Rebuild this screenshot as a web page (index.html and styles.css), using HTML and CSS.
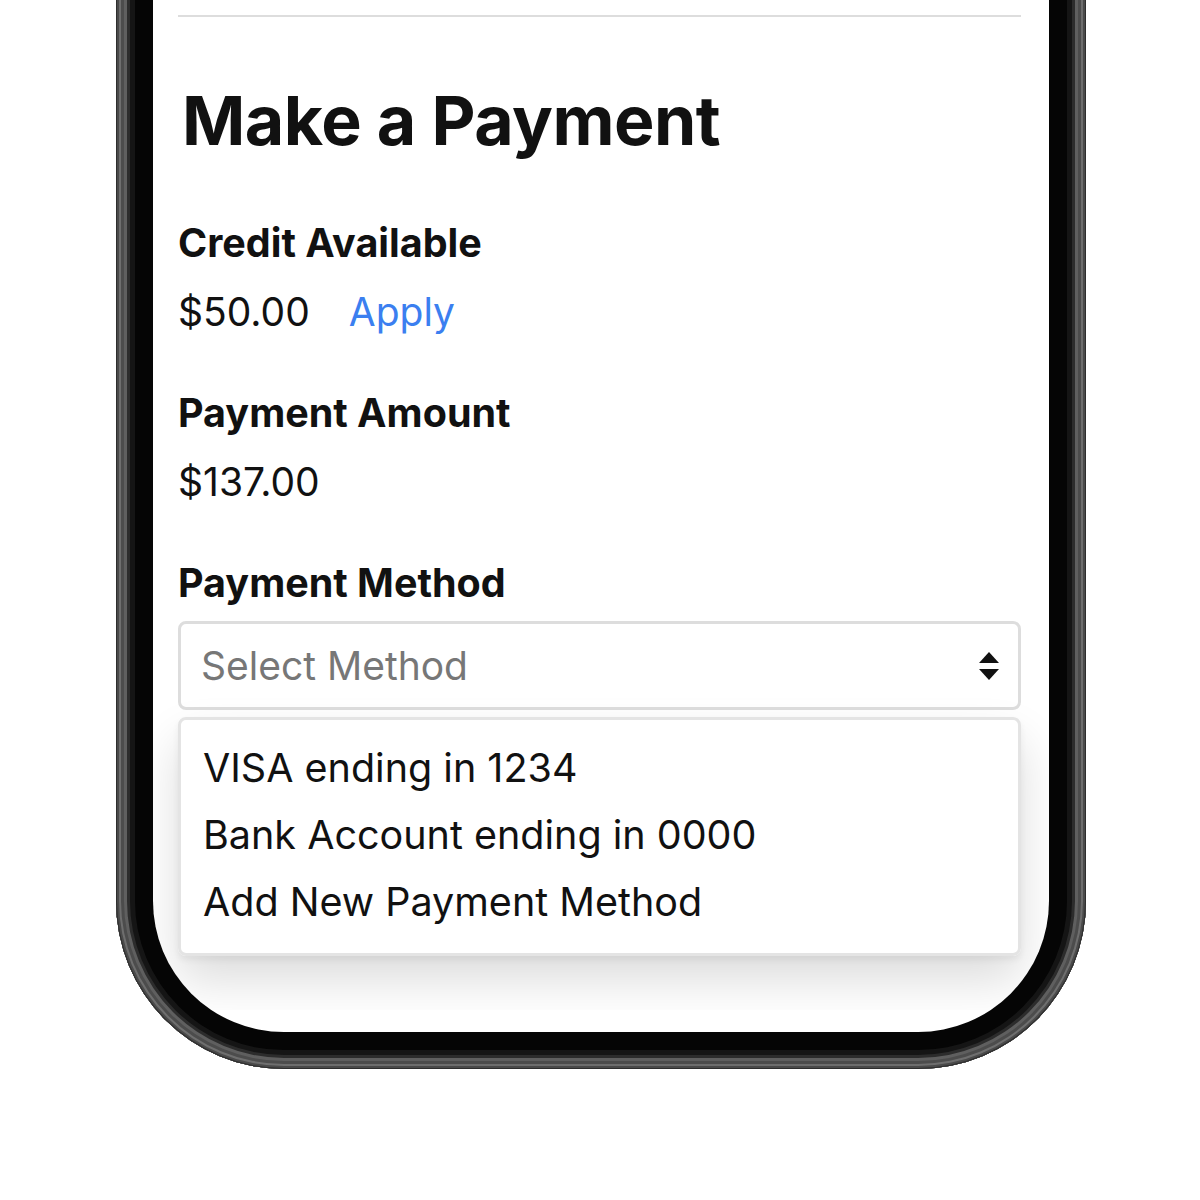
FILE: index.html
```html
<!DOCTYPE html>
<html lang="en">
<head>
    <meta charset="UTF-8">
    <meta name="viewport" content="width=device-width, initial-scale=1.0">
    <title>Make a Payment</title>
    <link rel="stylesheet" href="styles.css">
</head>
<body>

    <div class="phone">
        <div class="screen">
            <div class="content">
                <hr class="divider">

                <h1>Make a Payment</h1>

                <div class="field">
                    <div class="field-label">Credit Available</div>
                    <div class="field-value">
                        <span>$50.00</span>
                        <a href="#" class="link-apply">Apply</a>
                    </div>
                </div>

                <div class="field">
                    <div class="field-label">Payment Amount</div>
                    <div class="field-value">$137.00</div>
                </div>

                <div class="field field-method">
                    <div class="field-label">Payment Method</div>
                    <div class="select-box">
                        <span class="select-placeholder">Select Method</span>
                        <svg class="select-arrows" width="20" height="30" viewBox="0 0 20 30">
                            <path d="M10 1 L20 12 L0 12 Z" fill="#111"/>
                            <path d="M0 18 L20 18 L10 29 Z" fill="#111"/>
                        </svg>
                    </div>
                    <ul class="dropdown">
                        <li>VISA ending in 1234</li>
                        <li>Bank Account ending in 0000</li>
                        <li>Add New Payment Method</li>
                    </ul>
                </div>
            </div>
        </div>
    </div>

</body>
</html>
```

FILE: styles.css
```css
/* Basic Reset */
* {
    margin: 0;
    padding: 0;
    box-sizing: border-box;
}

body {
    font-family: 'Inter', 'Liberation Sans', sans-serif;
    background-color: #ffffff;
    color: #111111;
}

/* Phone frame: layered grey bezel fading into a black ring.
   Starts above the viewport so only the lower part shows. */
.phone {
    width: 970px;
    margin: -20px 0 0 116px;
    background-color: #050505;
    border-radius: 0 0 168px 168px;
    padding: 0 37px 37px;
    box-shadow:
        inset 0 0 0 1px #2e2e2e,
        inset 0 0 0 3px #4a4a4a,
        inset 0 0 0 5px #6e6e6e,
        inset 0 0 0 8px #4c4c4c,
        inset 0 0 0 11px #5f5f5f,
        inset 0 0 0 14px #2c2c2c,
        inset 0 0 0 19px #151515;
}

.screen {
    background-color: #ffffff;
    border-radius: 0 0 131px 131px;
    padding-bottom: 22px;
    overflow: hidden;
}

/* Clips the dropdown shadow just above the screen bottom */
.content {
    padding: 35px 28px 54px 25px;
    overflow: hidden;
}

.divider {
    border: none;
    height: 2px;
    background-color: #dddddd;
}

h1 {
    font-size: 68px;
    font-weight: 700;
    line-height: 80px;
    letter-spacing: -0.5px;
    margin: 63px 0 0 4px;
}

/* Label + value pairs */
.field {
    margin-top: 53px;
}

h1 + .field {
    margin-top: 59px;
}

.field-label {
    font-size: 39.5px;
    font-weight: 700;
    line-height: 48px;
    margin-bottom: 21px;
}

.field-value {
    font-size: 39px;
    font-weight: 400;
    line-height: 48px;
}

.link-apply {
    color: #3b7ff0;
    text-decoration: none;
    margin-left: 28px;
}

.field-method .field-label {
    margin-bottom: 14px;
}

/* Select */
.select-box {
    display: flex;
    align-items: center;
    justify-content: space-between;
    height: 89px;
    border: 3px solid #dddddd;
    border-radius: 8px;
    padding: 0 19px 0 20px;
}

.select-placeholder {
    font-size: 39px;
    color: #777777;
}

/* Dropdown list */
.dropdown {
    list-style: none;
    margin-top: 7px;
    border: 3px solid #e4e4e4;
    border-radius: 8px;
    padding: 15px 22px 17px;
    box-shadow: 0 4px 6px rgba(0, 0, 0, 0.06), 0 24px 48px rgba(0, 0, 0, 0.14);
}

.dropdown li {
    font-size: 39.5px;
    line-height: 67px;
}
```
